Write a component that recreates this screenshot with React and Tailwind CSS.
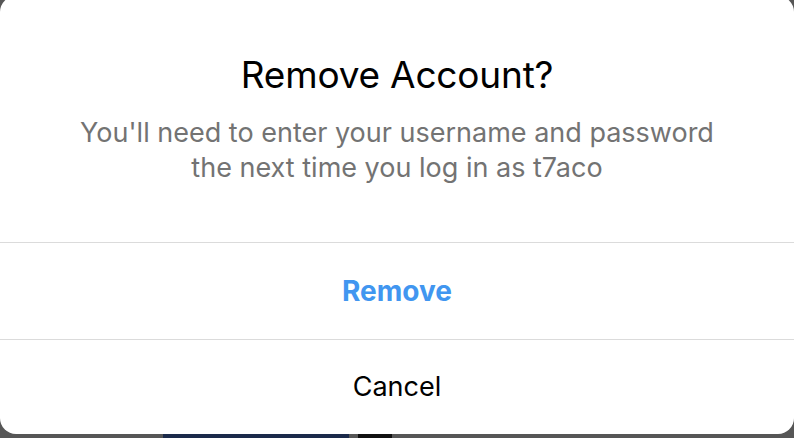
import React from 'react';

const font = { fontFamily: 'Inter, "Noto Sans", sans-serif' };

export default function App() {
  return (
    <div className="relative h-[438px] w-[794px] overflow-hidden bg-[#565656]" style={font}>
      {/* page underneath the modal backdrop */}
      <div className="flex h-full items-end">
        <div className="ml-[163px] h-[10px] w-[186px] bg-[#1b2a4a]" />
        <div className="ml-[9px] h-[10px] w-[34px] bg-[#111111]" />
      </div>

      {/* dialog */}
      <div className="absolute left-0 right-0 top-[-4px] flex h-[438px] flex-col overflow-hidden rounded-[16px] bg-white">
        <div className="flex h-[246px] flex-col items-center pt-[57px] text-center">
          <h1 className="text-[37px] leading-[44px] font-normal tracking-[-0.2px] text-black">Remove Account?</h1>
          <p className="mt-[18px] text-[27px] leading-[35px] text-[#737373]">
            You'll need to enter your username and password
            <br />
            the next time you log in as t7aco
          </p>
        </div>
        <button className="flex h-[97px] items-center justify-center border-t border-[#dbdbdb] text-[28px] font-bold text-[#4196f0]">
          Remove
        </button>
        <button className="flex h-[95px] items-center justify-center border-t border-[#dbdbdb] text-[27px] text-black">
          Cancel
        </button>
      </div>
    </div>
  );
}
